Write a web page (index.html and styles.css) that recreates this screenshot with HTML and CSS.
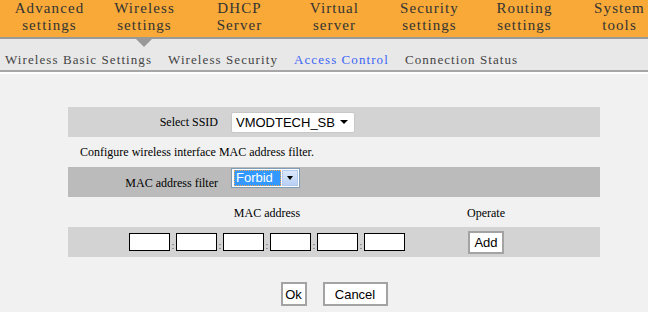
FILE: index.html
```html
<!DOCTYPE html>
<html>
<head>
<meta charset="utf-8">
<link rel="stylesheet" href="styles.css">
</head>
<body>
<header class="top">
  <nav class="menu">
    <div class="menu-item">Advanced<br>settings</div>
    <div class="menu-item">Wireless<br>settings</div>
    <div class="menu-item">DHCP<br>Server</div>
    <div class="menu-item">Virtual<br>server</div>
    <div class="menu-item">Security<br>settings</div>
    <div class="menu-item">Routing<br>settings</div>
    <div class="menu-item">System<br>tools</div>
  </nav>
  <div class="menu-rule"></div>
  <div class="subnav">
    <span class="pointer"></span>
    <a class="sub-item">Wireless Basic Settings</a>
    <a class="sub-item">Wireless Security</a>
    <a class="sub-item active">Access Control</a>
    <a class="sub-item">Connection Status</a>
  </div>
  <div class="subnav-rule"></div>
</header>
<main class="content">
  <div class="panel">
    <div class="row form-row ssid-row">
      <label class="field-label">Select SSID</label>
      <div class="ssid-select"><span>VMODTECH_SB</span><i class="caret"></i></div>
    </div>
    <div class="row note-row">Configure wireless interface MAC address filter.</div>
    <div class="row form-row filter-row">
      <label class="field-label low">MAC address filter</label>
      <div class="classic-select">
        <span class="cs-value"><span class="cs-text">Forbid</span></span>
        <span class="cs-btn"><i class="caret small"></i></span>
      </div>
    </div>
    <div class="row table-row head-row">
      <div class="cell">MAC address</div>
      <div class="cell">Operate</div>
    </div>
    <div class="row table-row mac-row">
      <div class="cell mac-cell">
        <input class="mac-box"><span class="colon">:</span><input class="mac-box"><span class="colon">:</span><input class="mac-box"><span class="colon">:</span><input class="mac-box"><span class="colon">:</span><input class="mac-box"><span class="colon">:</span><input class="mac-box">
      </div>
      <div class="cell"><button class="btn add-btn">Add</button></div>
    </div>
    <div class="actions">
      <button class="btn ok-btn">Ok</button>
      <button class="btn cancel-btn">Cancel</button>
    </div>
  </div>
</main>
</body>
</html>
```
FILE: styles.css
```css
* { box-sizing: border-box; }
html, body { margin: 0; padding: 0; }
body {
  width: 648px;
  height: 312px;
  overflow: hidden;
  background: #f1f1f1;
  font-family: "Liberation Serif", "Times New Roman", serif;
  color: #000;
}
.top { position: relative; }
.menu {
  display: flex;
  height: 37px;
  background: #f8a937;
  padding-left: 2px;
  overflow: hidden;
}
.menu-item {
  flex: none;
  width: 95px;
  text-align: center;
  font-size: 15px;
  line-height: 17px;
  letter-spacing: 1.1px;
  color: #333;
  white-space: nowrap;
}
.menu-rule { height: 2px; background: #999; }
.subnav {
  position: relative;
  height: 31px;
  background: #e8e8e8;
  display: flex;
  align-items: center;
  gap: 16px;
  padding: 10px 0 0 5px;
}
.pointer {
  position: absolute;
  left: 136px;
  top: 0;
  width: 0;
  height: 0;
  border-left: 8px solid transparent;
  border-right: 8px solid transparent;
  border-top: 8px solid #999;
}
.sub-item {
  font-size: 13px;
  letter-spacing: 1.08px;
  color: #444;
  white-space: nowrap;
}
.sub-item.active { color: #3b64f5; }
.subnav-rule {
  height: 4px;
  border-top: 2px solid #a6a6a6;
  background: #fff;
}
.content { padding-top: 33px; }
.panel {
  width: 532px;
  margin-left: 68px;
  font-size: 12px;
}
.row { height: 30px; }
.form-row {
  display: grid;
  grid-template-columns: 150px auto;
  column-gap: 13px;
  align-items: center;
}
.ssid-row { background: #d3d3d3; }
.filter-row { background: #bbbbbb; align-items: start; }
.field-label { text-align: right; }
.field-label.low { padding-top: 9px; }
.ssid-select {
  width: 124px;
  height: 21px;
  background: #fff;
  border: 1px solid #c8c8c8;
  border-radius: 2px;
  display: flex;
  align-items: center;
  justify-content: space-between;
  padding: 0 6px 0 4px;
  font-family: "Liberation Sans", Arial, sans-serif;
  font-size: 13px;
}
.caret {
  width: 0; height: 0;
  border-left: 4px solid transparent;
  border-right: 4px solid transparent;
  border-top: 4px solid #000;
}
.caret.small { border-left-width: 3.5px; border-right-width: 3.5px; border-top-width: 4px; }
.note-row {
  display: flex;
  align-items: center;
  padding-left: 12px;
}
.classic-select {
  margin-top: 1px;
  width: 69px;
  height: 20px;
  display: flex;
  border: 1px solid #7f9db9;
  background: #fff;
  padding: 1px;
  font-family: "Liberation Sans", Arial, sans-serif;
  font-size: 13px;
}
.cs-value {
  flex: 1;
  display: flex;
  padding-left: 1px;
}
.cs-text {
  flex: 1;
  background: #3399ff;
  color: #fff;
  border: 1px dotted #f0a050;
  line-height: 14px;
  padding-left: 1px;
}
.cs-btn {
  width: 16px;
  margin-left: 1px;
  background: linear-gradient(#dbe8fb, #b9d0f5);
  border: 1px solid #b2c8ee;
  display: flex;
  align-items: center;
  justify-content: center;
}
.table-row {
  display: grid;
  grid-template-columns: 398px 40px 1fr;
  align-items: center;
}
.table-row .cell { text-align: center; white-space: nowrap; }
.head-row .cell { padding-top: 2px; }
.mac-row { background: #d3d3d3; }
.mac-cell {
  display: flex;
  justify-content: center;
  align-items: flex-end;
}
.mac-box {
  width: 41px;
  height: 18px;
  border: 1px solid #000;
  background: #fff;
  padding: 0;
  margin: 0;
  outline: none;
}
.colon {
  width: 6px;
  text-align: center;
  font-size: 10px;
  line-height: 10px;
  color: #555;
}
.btn {
  background: #fff;
  border: 2px solid #a3a3a3;
  border-radius: 0;
  padding: 0;
  margin: 0;
  font-family: "Liberation Sans", Arial, sans-serif;
  font-size: 13px;
  color: #000;
  height: 24px;
}
.add-btn { width: 36px; height: 23px; }
.actions {
  display: flex;
  justify-content: center;
  gap: 16px;
  margin-top: 25px;
}
.ok-btn { width: 26px; }
.cancel-btn { width: 65px; }
```
